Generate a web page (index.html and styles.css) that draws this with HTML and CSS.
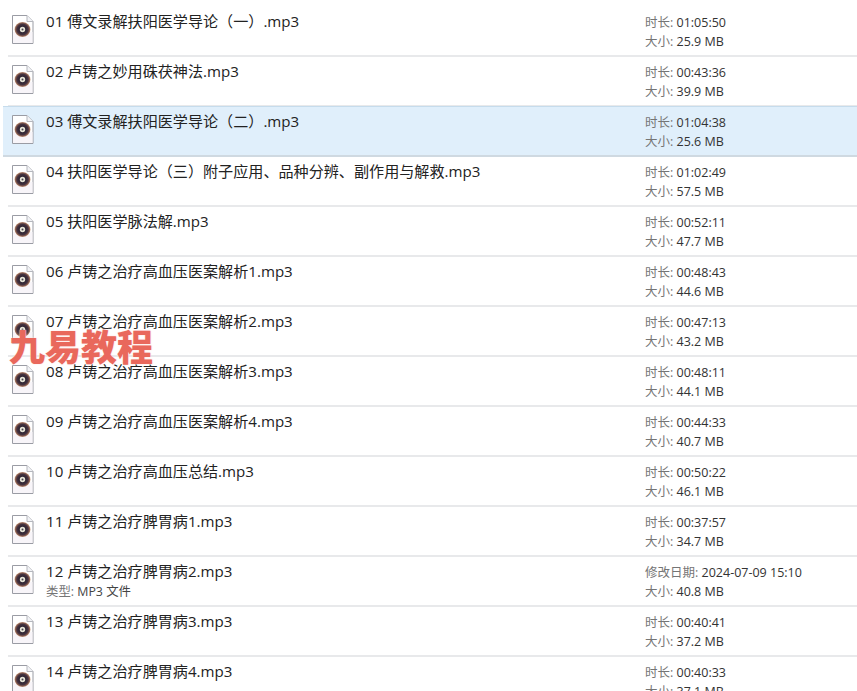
FILE: index.html
```html
<!DOCTYPE html>
<html lang="zh">
<head>
<meta charset="utf-8">
<title>文件列表</title>
<link rel="stylesheet" href="styles.css">
</head>
<body>
<svg class="defs" width="0" height="0" aria-hidden="true">
  <defs>
    <radialGradient id="disc" cx="50%" cy="50%" r="50%">
      <stop offset="0.35" stop-color="#2a2230"/>
      <stop offset="0.7" stop-color="#46323f"/>
      <stop offset="0.88" stop-color="#8d6252"/>
      <stop offset="1" stop-color="#cfa58c"/>
    </radialGradient>
    <symbol id="mp3" viewBox="0 0 22 29">
      <path d="M.5 .5H15L21 6.5V28.5H.5Z" fill="#fff" stroke="#9a9ca4"/>
      <path d="M15 .5V6.5H21" fill="#f1f2f5" stroke="#b5b7bd"/>
      <path d="M1 17H20.5V28H1Z" fill="#f8f5f9"/>
      <ellipse cx="10.5" cy="14.5" rx="8" ry="7.6" fill="url(#disc)"/>
      <circle cx="10.5" cy="14.5" r="2.7" fill="#e6e4d6"/>
      <circle cx="10.5" cy="14.5" r="1" fill="#4a4250"/>
    </symbol>
  </defs>
</svg>
<main class="list">
  <div class="row"><svg class="icon"><use href="#mp3"/></svg><div class="name"><div class="title">01 傅文录解扶阳医学导论（一）.mp3</div></div><div class="meta"><div><span>时长:</span> 01:05:50</div><div><span>大小:</span> 25.9 MB</div></div></div>
  <div class="row"><svg class="icon"><use href="#mp3"/></svg><div class="name"><div class="title">02 卢铸之妙用硃茯神法.mp3</div></div><div class="meta"><div><span>时长:</span> 00:43:36</div><div><span>大小:</span> 39.9 MB</div></div></div>
  <div class="row selected"><svg class="icon"><use href="#mp3"/></svg><div class="name"><div class="title">03 傅文录解扶阳医学导论（二）.mp3</div></div><div class="meta"><div><span>时长:</span> 01:04:38</div><div><span>大小:</span> 25.6 MB</div></div></div>
  <div class="row"><svg class="icon"><use href="#mp3"/></svg><div class="name"><div class="title">04 扶阳医学导论（三）附子应用、品种分辨、副作用与解救.mp3</div></div><div class="meta"><div><span>时长:</span> 01:02:49</div><div><span>大小:</span> 57.5 MB</div></div></div>
  <div class="row"><svg class="icon"><use href="#mp3"/></svg><div class="name"><div class="title">05 扶阳医学脉法解.mp3</div></div><div class="meta"><div><span>时长:</span> 00:52:11</div><div><span>大小:</span> 47.7 MB</div></div></div>
  <div class="row"><svg class="icon"><use href="#mp3"/></svg><div class="name"><div class="title">06 卢铸之治疗高血压医案解析1.mp3</div></div><div class="meta"><div><span>时长:</span> 00:48:43</div><div><span>大小:</span> 44.6 MB</div></div></div>
  <div class="row"><svg class="icon"><use href="#mp3"/></svg><div class="name"><div class="title">07 卢铸之治疗高血压医案解析2.mp3</div></div><div class="meta"><div><span>时长:</span> 00:47:13</div><div><span>大小:</span> 43.2 MB</div></div></div>
  <div class="row"><svg class="icon"><use href="#mp3"/></svg><div class="name"><div class="title">08 卢铸之治疗高血压医案解析3.mp3</div></div><div class="meta"><div><span>时长:</span> 00:48:11</div><div><span>大小:</span> 44.1 MB</div></div></div>
  <div class="row"><svg class="icon"><use href="#mp3"/></svg><div class="name"><div class="title">09 卢铸之治疗高血压医案解析4.mp3</div></div><div class="meta"><div><span>时长:</span> 00:44:33</div><div><span>大小:</span> 40.7 MB</div></div></div>
  <div class="row"><svg class="icon"><use href="#mp3"/></svg><div class="name"><div class="title">10 卢铸之治疗高血压总结.mp3</div></div><div class="meta"><div><span>时长:</span> 00:50:22</div><div><span>大小:</span> 46.1 MB</div></div></div>
  <div class="row"><svg class="icon"><use href="#mp3"/></svg><div class="name"><div class="title">11 卢铸之治疗脾胃病1.mp3</div></div><div class="meta"><div><span>时长:</span> 00:37:57</div><div><span>大小:</span> 34.7 MB</div></div></div>
  <div class="row"><svg class="icon"><use href="#mp3"/></svg><div class="name"><div class="title">12 卢铸之治疗脾胃病2.mp3</div><div class="sub"><span>类型:</span> MP3 文件</div></div><div class="meta"><div><span>修改日期:</span> 2024-07-09 15:10</div><div><span>大小:</span> 40.8 MB</div></div></div>
  <div class="row"><svg class="icon"><use href="#mp3"/></svg><div class="name"><div class="title">13 卢铸之治疗脾胃病3.mp3</div></div><div class="meta"><div><span>时长:</span> 00:40:41</div><div><span>大小:</span> 37.2 MB</div></div></div>
  <div class="row"><svg class="icon"><use href="#mp3"/></svg><div class="name"><div class="title">14 卢铸之治疗脾胃病4.mp3</div></div><div class="meta"><div><span>时长:</span> 00:40:33</div><div><span>大小:</span> 37.1 MB</div></div></div>
</main>
<div class="watermark">九易教程</div>
</body>
</html>
```
FILE: styles.css
```css
html, body {
  margin: 0;
  padding: 0;
  height: 691px;
  overflow: hidden;
  background: #fff;
}
body {
  font-family: "Open Sans", "Noto Sans CJK SC", sans-serif;
  color: #1c1c1c;
  position: relative;
}
.defs {
  position: absolute;
}
.list {
  padding-top: 7px;
}
.row {
  box-sizing: border-box;
  height: 50px;
  margin-left: 8px;
  padding-left: 4px;
  display: flex;
  align-items: flex-start;
  border-bottom: 2px solid #e8e9eb;
}
.icon {
  width: 22px;
  height: 29px;
  margin-top: 8px;
  flex: none;
}
.name {
  width: 599px;
  margin-left: 12px;
  flex: none;
}
.title {
  font-size: 15.1px;
  line-height: 20px;
  margin-top: 4px;
  color: #222;
}
.sub {
  font-size: 12.4px;
  line-height: 16px;
  margin-top: 3px;
  color: #444;
}
.meta {
  font-size: 12.5px;
  line-height: 19px;
  margin-top: 6px;
  color: #333;
}
.sub span, .meta span {
  color: #757575;
}
.selected {
  margin-left: 3px;
  padding-left: 9px;
  background: #e0effb;
  border-top: 1px solid #c6dcec;
  border-bottom: 2px solid #cfd9e1;
  margin-top: -1px;
  height: 51px;
}
.selected .icon {
  margin-top: 8px;
}
.watermark {
  position: absolute;
  left: 9px;
  top: 324px;
  font-family: "Noto Sans CJK SC", sans-serif;
  font-size: 36px;
  line-height: 42px;
  font-weight: 900;
  color: #e9685c;
  text-shadow: 0 0 2px #fde3df, 0 0 1px #fde3df;
  white-space: nowrap;
}
```
